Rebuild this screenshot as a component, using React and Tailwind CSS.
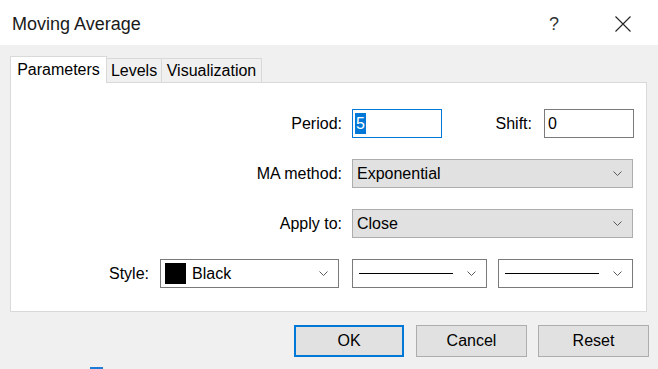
import React from "react";

const Chevron = () => (
  <svg width="9" height="6" viewBox="0 0 9 6" className="shrink-0">
    <path d="M0.5 0.5 L4.5 4.5 L8.5 0.5" fill="none" stroke="#5a5a5a" strokeWidth="1" />
  </svg>
);

const Select = ({ children, className = "" }) => (
  <div className={`h-[29px] flex items-center justify-between pl-[4px] pr-[10px] ${className}`}>
    <div className="flex items-center">{children}</div>
    <Chevron />
  </div>
);

const LineSelect = () => (
  <Select className="w-[135px] bg-white border border-[#7a7a7a]">
    <div className="h-[1.5px] w-[94px] bg-black ml-[2px]" />
  </Select>
);

export default function App() {
  return (
    <div className="w-[658px] h-[369px] bg-[#f0f0f0] flex flex-col text-[16px] text-black overflow-hidden" style={{ fontFamily: '"Liberation Sans", Arial, sans-serif' }}>
      {/* Title bar */}
      <div className="h-[45px] bg-white flex items-center shrink-0 pt-[3px]">
        <span className="ml-[12px] text-[18px] text-[#1a1a1a]">Moving Average</span>
        <span className="ml-auto mr-[56px] text-[18px] text-[#333]">?</span>
        <svg width="16" height="16" viewBox="0 0 16 16" className="mr-[27px]">
          <path d="M0.5 0.5 L15.5 15.5 M15.5 0.5 L0.5 15.5" stroke="#222" strokeWidth="1.1" fill="none" />
        </svg>
      </div>

      {/* Tabs */}
      <div className="flex items-end ml-[10px] mt-[11px] h-[27px] relative z-10">
        <div className="h-[27px] w-[97px] bg-white border border-b-0 border-[#d9d9d9] flex items-center justify-center pb-[1px]">
          Parameters
        </div>
        <div className="h-[25px] w-[55px] border border-l-0 border-b-0 border-[#d9d9d9] flex items-center justify-center">
          Levels
        </div>
        <div className="h-[25px] w-[100px] border border-l-0 border-b-0 border-[#d9d9d9] flex items-center justify-center">
          Visualization
        </div>
      </div>

      {/* Panel */}
      <div className="ml-[10px] w-[637px] h-[230px] bg-white border border-[#d9d9d9] -mt-[1px] flex flex-col gap-[21px] pt-[26px]">
        <div className="flex items-center h-[29px]">
          <span className="w-[331px] text-right">Period:</span>
          <div className="ml-[10px] w-[90px] h-[29px] border border-[#0078d7] flex items-center pl-[2px]">
            <span className="bg-[#0078d7] text-white leading-[21px] px-[1px]">5</span>
          </div>
          <span className="w-[90px] text-right">Shift:</span>
          <div className="ml-[12px] w-[90px] h-[29px] border border-[#7a7a7a] flex items-center pl-[3px]">0</div>
        </div>

        <div className="flex items-center h-[29px]">
          <span className="w-[331px] text-right">MA method:</span>
          <Select className="ml-[10px] w-[281px] bg-[#e1e1e1] border border-[#adadad]">Exponential</Select>
        </div>

        <div className="flex items-center h-[29px]">
          <span className="w-[331px] text-right">Apply to:</span>
          <Select className="ml-[10px] w-[281px] bg-[#e1e1e1] border border-[#adadad]">Close</Select>
        </div>

        <div className="flex items-center h-[29px]">
          <span className="w-[138px] text-right">Style:</span>
          <Select className="ml-[11px] w-[179px] bg-white border border-[#7a7a7a]">
            <div className="w-[21px] h-[21px] bg-black mr-[6px]" />
            <span>Black</span>
          </Select>
          <div className="ml-[13px]">
            <LineSelect />
          </div>
          <div className="ml-[11px]">
            <LineSelect />
          </div>
        </div>
      </div>

      {/* Buttons */}
      <div className="flex items-center mt-[13px] ml-[294px] gap-[12px]">
        <button className="w-[110px] h-[32px] bg-[#e1e1e1] border-2 border-[#0078d7]">OK</button>
        <button className="w-[111px] h-[32px] bg-[#e1e1e1] border border-[#adadad]">Cancel</button>
        <button className="w-[111px] h-[32px] bg-[#e1e1e1] border border-[#adadad] -ml-[1px]">Reset</button>
      </div>

      <div className="ml-[90px] mt-[10px] w-[13px] h-[2px] bg-[#1e7bd8]" />
    </div>
  );
}
